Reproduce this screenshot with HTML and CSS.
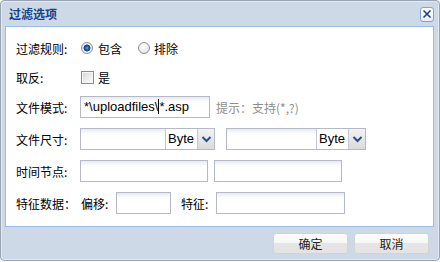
FILE: index.html
```html
<!DOCTYPE html>
<html>
<head>
<meta charset="utf-8">
<link rel="stylesheet" href="styles.css">
</head>
<body>
<div class="dialog">
  <div class="titlebar">
    <span class="title">过滤选项</span>
    <span class="close"><svg width="10" height="10" viewBox="0 0 10 10"><path d="M1.5 1.5 L8.5 8.5 M8.5 1.5 L1.5 8.5" stroke="#1d3b78" stroke-width="1.5" fill="none"/></svg></span>
  </div>
  <div class="panel">
    <div class="row r1">
      <span class="lbl">过滤规则:</span>
      <span class="radio on"></span><span class="opt">包含</span>
      <span class="radio second"></span><span class="opt">排除</span>
    </div>
    <div class="row r2">
      <span class="lbl">取反:</span>
      <span class="check"></span><span class="opt">是</span>
    </div>
    <div class="row r3">
      <span class="lbl">文件模式:</span>
      <div class="field w-mode">*\uploadfiles\<span class="caret"></span>*.asp</div>
      <span class="hint">提示：支持(*,?)</span>
    </div>
    <div class="row rn">
      <span class="lbl">文件尺寸:</span>
      <div class="combo c1">
        <div class="cfield"></div>
        <div class="unit">Byte</div>
        <div class="arrow"><svg width="11" height="8" viewBox="0 0 11 8"><path d="M1.5 2 L5.5 6 L9.5 2" stroke="#2c4c88" stroke-width="2" fill="none"/></svg></div>
      </div>
      <div class="combo c2">
        <div class="cfield"></div>
        <div class="unit">Byte</div>
        <div class="arrow"><svg width="11" height="8" viewBox="0 0 11 8"><path d="M1.5 2 L5.5 6 L9.5 2" stroke="#2c4c88" stroke-width="2" fill="none"/></svg></div>
      </div>
    </div>
    <div class="row rn">
      <span class="lbl">时间节点:</span>
      <div class="field w-time"></div>
      <div class="field w-time gap6"></div>
    </div>
    <div class="row rn">
      <span class="lbl">特征数据：</span>
      <span class="sub first">偏移:</span>
      <div class="field w-off"></div>
      <span class="sub second">特征:</span>
      <div class="field w-feat"></div>
    </div>
  </div>
  <div class="footer">
    <button class="btn">确定</button>
    <button class="btn">取消</button>
  </div>
</div>
</body>
</html>
```
FILE: styles.css
```css
* { box-sizing: border-box; }
html, body { margin: 0; padding: 0; background: #ffffff; }
body {
  font-family: "Liberation Sans", "Noto Sans CJK SC", sans-serif;
  font-size: 12px;
  color: #000;
}
.dialog {
  width: 440px;
  height: 261px;
  background: #ced9e7;
  border: 1px solid #99a3b1;
  border-radius: 4px;
  box-shadow: inset 0 0 0 1px #e3eaf2;
  display: flex;
  flex-direction: column;
}
.titlebar {
  height: 25px;
  display: flex;
  align-items: center;
  justify-content: space-between;
  padding: 0 5px 0 8px;
}
.title {
  font-family: "Noto Sans CJK SC", sans-serif;
  font-weight: bold;
  font-size: 12px;
  color: #15428b;
  line-height: 1;
  margin-top: 1px;
}
.close {
  width: 14px;
  height: 15px;
  border: 1px solid #7fa3d6;
  border-radius: 3px;
  background: linear-gradient(#ffffff, #e7eef8);
  display: flex;
  align-items: center;
  justify-content: center;
  margin-top: 1px;
}
.panel {
  margin: 0 5px 0 4px;
  height: 201px;
  background: #fff;
  border: 1px solid #99bbe8;
  padding: 10px 0 0 10px;
}
.row {
  display: flex;
  align-items: center;
  height: 22px;
}
.r2 { margin-top: 7px; }
.r3 { margin-top: 8px; }
.rn { margin-top: 10px; }
.lbl {
  width: 64px;
  flex: none;
  white-space: nowrap;
  font-family: "Noto Sans CJK SC", sans-serif;
}
.opt { font-family: "Noto Sans CJK SC", sans-serif; }
.radio {
  width: 12px;
  height: 12px;
  border-radius: 50%;
  border: 1px solid #8d939b;
  background: radial-gradient(circle at 40% 35%, #ffffff 0, #f2f2f2 40%, #d2d2d2 100%);
  margin: 0 5px 0 1px;
  flex: none;
}
.radio.on {
  background: radial-gradient(circle at 50% 50%, #69b1ec 0, #2468b0 1.6px, #0f3c78 3.2px, #f4f4f4 3.8px, #d6d6d6 100%);
}
.radio.second { margin-left: 16px; margin-right: 4px; }
.check {
  width: 13px;
  height: 13px;
  border: 1px solid #8c8c8c;
  background: linear-gradient(135deg, #d6d6d6, #f7f7f7 80%);
  box-shadow: inset 0 0 0 1px #f6f6f6;
  margin: 0 4px 0 1px;
  flex: none;
}
.field {
  height: 22px;
  border: 1px solid #b5b8c8;
  background: linear-gradient(#e8eaec, #ffffff 5px);
  font-family: "Liberation Sans", sans-serif;
  font-size: 13px;
  line-height: 20px;
  padding-left: 3px;
  white-space: nowrap;
  flex: none;
}
.caret {
  display: inline-block;
  width: 1px;
  height: 15px;
  background: #000;
  vertical-align: -3px;
}
.w-mode { width: 130px; }
.hint {
  margin-left: 6px;
  color: #8c8c8c;
  font-family: "Noto Sans CJK SC", sans-serif;
}
.combo {
  height: 22px;
  display: flex;
  border: 1px solid #b5b8c8;
  flex: none;
}
.c1 { width: 135px; }
.c2 { width: 140px; margin-left: 11px; }
.cfield {
  flex: 1;
  background: linear-gradient(#e8eaec, #ffffff 5px);
}
.unit {
  width: 32px;
  border-left: 1px solid #c4c7d4;
  background: #fff;
  font-family: "Liberation Sans", sans-serif;
  font-size: 13px;
  line-height: 20px;
  padding-left: 2px;
}
.arrow {
  width: 17px;
  border-left: 1px solid #c4c7d4;
  background: linear-gradient(#f3f3f3, #dadada);
  display: flex;
  align-items: center;
  justify-content: center;
}
.w-time { width: 128px; }
.gap6 { margin-left: 6px; }
.sub {
  width: 35px;
  flex: none;
  font-family: "Noto Sans CJK SC", sans-serif;
}
.sub.first { margin-left: 1px; }
.sub.second { margin-left: 10px; }
.w-off { width: 55px; }
.w-feat { width: 129px; }
.footer {
  display: flex;
  justify-content: flex-end;
  gap: 6px;
  padding: 6px 10px 0 0;
}
.btn {
  width: 75px;
  height: 21px;
  border: 1px solid #d3d3d3;
  border-radius: 3px;
  background: linear-gradient(#ffffff 0, #f7f7f7 45%, #e6e6e6 50%, #e3e3e3 100%);
  font-family: "Noto Sans CJK SC", sans-serif;
  font-size: 12px;
  color: #222;
  padding: 0;
  line-height: 19px;
}
```
